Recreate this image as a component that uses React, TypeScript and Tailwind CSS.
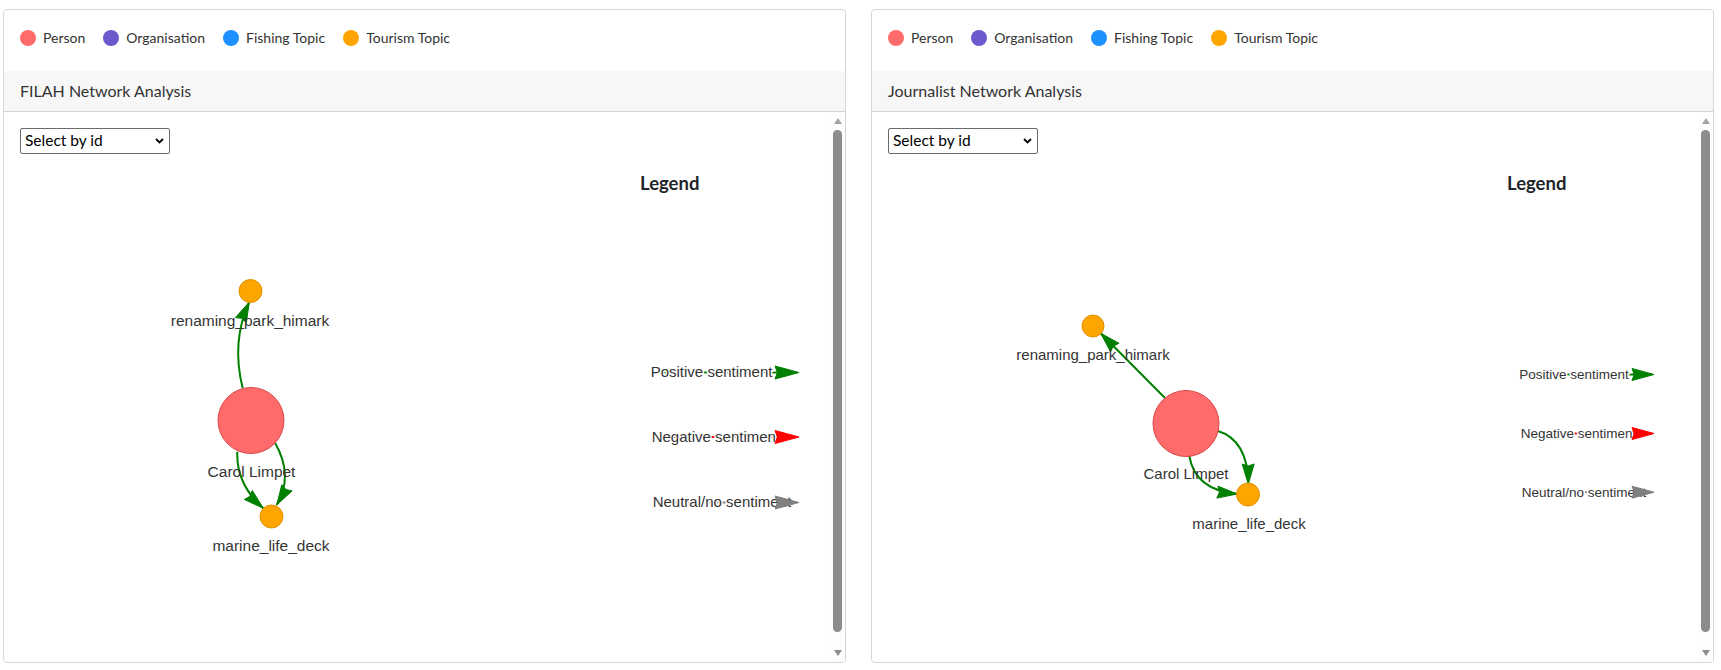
import React from "react";

type Pt = [number, number];

const UI_FONT = "Lato, 'Noto Sans', sans-serif";
const SVG_FONT = "'Liberation Sans', Arial, sans-serif";

function arrowPath(tip: Pt, angle: number, len: number, w: number) {
  const pts: Pt[] = [
    [0, 0],
    [-len, w],
    [-len * 0.9, 0],
    [-len, -w],
  ];
  const c = Math.cos(angle);
  const s = Math.sin(angle);
  return (
    pts
      .map(([px, py], i) => `${i ? "L" : "M"}${(tip[0] + px * c - py * s).toFixed(2)},${(tip[1] + px * s + py * c).toFixed(2)}`)
      .join(" ") + " Z"
  );
}

function Edge({ s, c, e, color = "#008000", len = 20, w = 6 }: { s: Pt; c: Pt; e: Pt; color?: string; len?: number; w?: number }) {
  const angle = Math.atan2(e[1] - c[1], e[0] - c[0]);
  return (
    <g>
      <path d={`M${s[0]},${s[1]} Q${c[0]},${c[1]} ${e[0]},${e[1]}`} fill="none" stroke={color} strokeWidth={2} />
      <path d={arrowPath(e, angle, len, w)} fill={color} stroke={color} strokeWidth={1} strokeLinejoin="round" />
    </g>
  );
}

function Node({ x, y, r, kind }: { x: number; y: number; r: number; kind: "person" | "tourism" }) {
  const fill = kind === "person" ? "#ff6b6b" : "#ffa500";
  const stroke = kind === "person" ? "#d94848" : "#e09000";
  return <circle cx={x} cy={y} r={r} fill={fill} stroke={stroke} strokeWidth={1} />;
}

function Label({ x, y, text, size }: { x: number; y: number; text: string; size: number }) {
  return (
    <text x={x} y={y} textAnchor="middle" fontFamily={SVG_FONT} fontSize={size} fill="#343434">
      {text}
    </text>
  );
}

type LegendRow = { label: string; color: string; textX: number; baseline: number; lineY: number };

function LegendItems({ rows, tipX, size, len, w }: { rows: LegendRow[]; tipX: number; size: number; len: number; w: number }) {
  return (
    <g>
      {rows.map((r) => (
        <g key={r.label}>
          <line x1={r.textX + 2} y1={r.lineY} x2={tipX - len + 2} y2={r.lineY} stroke={r.color} strokeWidth={2} />
          <text
            x={r.textX}
            y={r.baseline}
            fontFamily={SVG_FONT}
            fontSize={size}
            fill="#343434"
            stroke="#ffffff"
            strokeWidth={3}
            paintOrder="stroke"
          >
            {r.label}
          </text>
          <path d={arrowPath([tipX, r.lineY], 0, len, w)} fill={r.color} stroke={r.color} strokeWidth={1} strokeLinejoin="round" />
        </g>
      ))}
    </g>
  );
}

function FilahGraph() {
  return (
    <svg width={826} height={508} className="block">
      <text x={636} y={36} fontFamily={UI_FONT} fontWeight={700} fontSize={18.5} fill="#212529">
        Legend
      </text>
      <Edge s={[238.7, 234.3]} c={[227, 187.5]} e={[245.3, 148]} />
      <Edge s={[233.3, 297.7]} c={[232, 330]} e={[259.3, 354.3]} />
      <Edge s={[271, 288.7]} c={[290, 322]} e={[272.7, 351]} />
      <Node x={246.5} y={137} r={11.5} kind="tourism" />
      <Node x={247} y={266.5} r={33} kind="person" />
      <Node x={267.5} y={362.5} r={11.5} kind="tourism" />
      <Label x={246} y={172} text="renaming_park_himark" size={15.5} />
      <Label x={247.5} y={323} text="Carol Limpet" size={15.5} />
      <Label x={267} y={396.5} text="marine_life_deck" size={15.5} />
      <LegendItems
        tipX={795}
        size={15}
        len={24}
        w={6.5}
        rows={[
          { label: "Positive sentiment", color: "#008000", textX: 646.7, baseline: 223, lineY: 218.5 },
          { label: "Negative sentiment", color: "#ff0000", textX: 647.7, baseline: 287.5, lineY: 283 },
          { label: "Neutral/no sentiment", color: "#808080", textX: 648.7, baseline: 353, lineY: 348.5 },
        ]}
      />
    </svg>
  );
}

function JournalistGraph() {
  return (
    <svg width={826} height={508} className="block">
      <text x={635} y={36} fontFamily={UI_FONT} fontWeight={700} fontSize={18.5} fill="#212529">
        Legend
      </text>
      <Edge s={[293, 244]} c={[260.8, 211.6]} e={[228.7, 179.3]} />
      <Edge s={[345.3, 276.7]} c={[376, 286]} e={[376.3, 330]} />
      <Edge s={[317.3, 302]} c={[323, 336]} e={[365.3, 340]} />
      <Node x={221} y={172} r={11} kind="tourism" />
      <Node x={314} y={269.5} r={33} kind="person" />
      <Node x={376} y={340.5} r={11.5} kind="tourism" />
      <Label x={221} y={205.5} text="renaming_park_himark" size={15} />
      <Label x={314} y={325} text="Carol Limpet" size={15} />
      <Label x={377} y={375} text="marine_life_deck" size={15} />
      <LegendItems
        tipX={782}
        size={13.5}
        len={22}
        w={6}
        rows={[
          { label: "Positive sentiment", color: "#008000", textX: 647.3, baseline: 224.5, lineY: 220.5 },
          { label: "Negative sentiment", color: "#ff0000", textX: 648.7, baseline: 284, lineY: 279.5 },
          { label: "Neutral/no sentiment", color: "#808080", textX: 649.7, baseline: 342.5, lineY: 338.2 },
        ]}
      />
    </svg>
  );
}

const legendTypes = [
  { label: "Person", color: "bg-[#ff6b6b]" },
  { label: "Organisation", color: "bg-[#6a5acd]" },
  { label: "Fishing Topic", color: "bg-[#1e90ff]" },
  { label: "Tourism Topic", color: "bg-[#ffa500]" },
];

function Scrollbar() {
  return (
    <div className="flex w-[15px] shrink-0 flex-col items-center bg-[#fdfdfd] pt-[6px] pb-[6px]">
      <div className="h-0 w-0 border-x-[4px] border-b-[6px] border-x-transparent border-b-[#a3a3a3]" />
      <div className="mt-[6px] h-[502px] w-[9px] rounded-full bg-[#8c8c8c]" />
      <div className="mt-[18px] h-0 w-0 border-x-[4px] border-t-[6px] border-x-transparent border-t-[#8c8c8c]" />
    </div>
  );
}

function Card({ title, children }: { title: string; children: React.ReactNode }) {
  return (
    <div className="flex h-[654px] min-w-0 flex-1 flex-col overflow-hidden rounded-[4px] border border-[#d6d6d6] bg-white">
      <div className="flex h-[61px] shrink-0 items-start pl-[16px] pt-[20px]">
        {legendTypes.map((t) => (
          <div key={t.label} className="mr-[18px] flex h-[16px] items-center">
            <span className={`h-[16px] w-[16px] rounded-full ${t.color}`} />
            <span className="ml-[7px] text-[14px] leading-none text-[#333333]">{t.label}</span>
          </div>
        ))}
      </div>
      <div className="flex h-[41px] shrink-0 items-center border-b border-[#d4d4d4] bg-[#f7f7f7] pl-[16px] text-[16px] text-[#333333]">
        {title}
      </div>
      <div className="flex min-h-0 flex-1">
        <div className="min-w-0 flex-1 overflow-hidden">
          <div className="pl-[16px] pt-[16px]">
            <div className="flex h-[26px] w-[150px] items-center justify-between rounded-[2px] border border-[#6b6b6b] bg-white pl-[4px] pr-[5px] text-[15.5px] text-black">
              <span>Select by id</span>
              <svg width="9" height="6" viewBox="0 0 9 6">
                <polyline points="1,1 4.5,4.5 8,1" fill="none" stroke="#000" strokeWidth="1.8" />
              </svg>
            </div>
          </div>
          {children}
        </div>
        <Scrollbar />
      </div>
    </div>
  );
}

export default function App() {
  return (
    <div className="flex h-[670px] w-[1721px] gap-[25px] bg-white pl-[3px] pr-[7px] pt-[9px]" style={{ fontFamily: UI_FONT }}>
      <Card title="FILAH Network Analysis">
        <FilahGraph />
      </Card>
      <Card title="Journalist Network Analysis">
        <JournalistGraph />
      </Card>
    </div>
  );
}
